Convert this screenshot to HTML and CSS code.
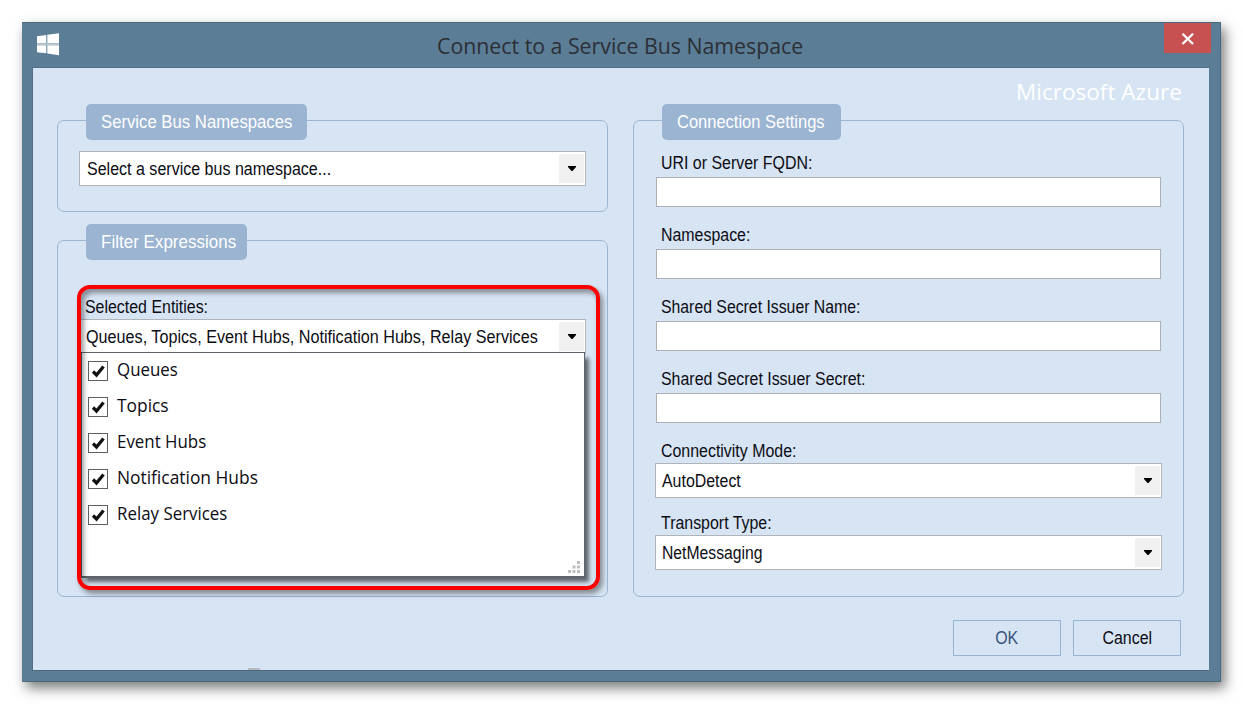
FILE: index.html
```
<!DOCTYPE html>
<html lang="en">
<head>
<meta charset="utf-8">
<title>Connect to a Service Bus Namespace</title>
<link rel="stylesheet" href="styles.css">
</head>
<body>
<div class="window">
  <header class="titlebar">
    <svg class="logo" width="23" height="23" viewBox="0 0 23 23"><path fill="#fff" d="M0 3.2 9.3 2V10.300H0zM10.300 1.800 22 .2V10.300H10.300zM0 12.200H9.300V20.300L0 19.200zM10.300 12.200H22V22.300L10.300 20.500z"/><path fill="#b9c8cf" d="M0 10.300H22V12.200H0z"/></svg>
    <h1 class="title"><span class="t t-title">Connect to a Service Bus Namespace</span></h1>
    <button class="close" aria-label="Close"><svg width="14" height="12" viewBox="0 0 14 12"><path d="M1.500.8 12 11M12 .8 1.500 11" stroke="#fff" stroke-width="2.300"/></svg></button>
  </header>
  <main class="client">
    <div class="brand"><span class="t t-brand">Microsoft Azure</span></div>
    <div class="columns">
      <div class="column">
        <section class="group group-ns">
          <div class="legend w-ns"><span class="t t-ns">Service Bus Namespaces</span></div>
          <div class="combo"><span class="t t-select">Select a service bus namespace...</span><i class="drop"><svg width="8" height="5"><path d="M0 0H8V1L4.500 5H3.500L0 1z"/></svg></i></div>
        </section>
        <section class="group group-filter">
          <div class="legend w-filter"><span class="t t-filter">Filter Expressions</span></div>
          <div class="label label-entities"><span class="t t-entities">Selected Entities:</span></div>
          <div class="combo combo-entities"><span class="t t-list">Queues, Topics, Event Hubs, Notification Hubs, Relay Services</span><i class="drop"><svg width="8" height="5"><path d="M0 0H8V1L4.500 5H3.500L0 1z"/></svg></i></div>
          <div class="menu">
            <label class="item"><i class="check"><svg width="15" height="15" viewBox="0 0 15 15"><path d="M2 7.500 5.500 11 12.500 2.500" /></svg></i><span class="t t-item">Queues</span></label>
            <label class="item"><i class="check"><svg width="15" height="15" viewBox="0 0 15 15"><path d="M2 7.500 5.500 11 12.500 2.500" /></svg></i><span class="t t-item t-wide">Topics</span></label>
            <label class="item"><i class="check"><svg width="15" height="15" viewBox="0 0 15 15"><path d="M2 7.500 5.500 11 12.500 2.500" /></svg></i><span class="t t-item">Event Hubs</span></label>
            <label class="item"><i class="check"><svg width="15" height="15" viewBox="0 0 15 15"><path d="M2 7.500 5.500 11 12.500 2.500" /></svg></i><span class="t t-item t-wide">Notification Hubs</span></label>
            <label class="item"><i class="check"><svg width="15" height="15" viewBox="0 0 15 15"><path d="M2 7.500 5.500 11 12.500 2.500" /></svg></i><span class="t t-item">Relay Services</span></label>
            <svg class="grip" width="13" height="13"><path fill="#bdbdbd" d="M9 0h3v3H9zM4.500 4.500h3v3h-3zM9 4.500h3v3H9zM0 9h3v3H0zM4.500 9h3v3h-3zM9 9h3v3H9z"/></svg>
          </div>
          <div class="highlight"></div>
        </section>
      </div>
      <section class="group group-settings">
        <div class="legend w-settings"><span class="t t-settings">Connection Settings</span></div>
        <div class="fields">
          <div class="label"><span class="t t-uri">URI or Server FQDN:</span></div><div class="input"></div>
          <div class="label"><span class="t t-name">Namespace:</span></div><div class="input"></div>
          <div class="label"><span class="t t-issuer">Shared Secret Issuer Name:</span></div><div class="input"></div>
          <div class="label"><span class="t t-secret">Shared Secret Issuer Secret:</span></div><div class="input"></div>
          <div class="label"><span class="t t-mode">Connectivity Mode:</span></div>
          <div class="combo combo-field"><span class="t t-auto">AutoDetect</span><i class="drop"><svg width="8" height="5"><path d="M0 0H8V1L4.500 5H3.500L0 1z"/></svg></i></div>
          <div class="label"><span class="t t-type">Transport Type:</span></div>
          <div class="combo combo-field"><span class="t t-net">NetMessaging</span><i class="drop"><svg width="8" height="5"><path d="M0 0H8V1L4.500 5H3.500L0 1z"/></svg></i></div>
        </div>
      </section>
    </div>
    <footer class="footer"><button class="btn ok"><span class="t t-ok">OK</span></button><button class="btn"><span class="t t-cancel">Cancel</span></button></footer>
    <div class="sliver"></div>
  </main>
</div>
</body>
</html>
```
FILE: styles.css
```
* { box-sizing: border-box; }
body {
  margin: 0;
  padding: 22px;
  height: 704px;
  overflow: hidden;
  background: #fff;
  font: 17.5px/20px "Liberation Sans", Arial, sans-serif;
  color: #0c0c14;
}
svg { display: block; }
.t { display: inline-block; white-space: pre; transform-origin: 0 50%; transform: scaleX(.91); }
.t-title { transform: scaleX(.968); }
.t-brand { transform: scaleX(1.025); }
.t-ns { transform: scaleX(.955); }
.t-filter { transform: scaleX(.972); }
.t-settings { transform: scaleX(.942); }
.t-select { transform: scaleX(.916); }
.t-list { transform: scaleX(.924); }
.t-issuer { transform: scaleX(.903); }
.t-net { transform: scaleX(.898); }
.t-item { transform: scaleX(.965); }
.t-wide { transform: scaleX(.993); }
.window {
  width: 1199px;
  height: 660px;
  display: flex;
  flex-direction: column;
  padding: 0 11px 10px 9px;
  background: #5c7d96;
  border: 1px solid #49677d;
  border-left-color: #5c7d96;
  box-shadow: 4px 6px 12px rgba(0, 0, 0, .52);
}
.titlebar { height: 44px; display: flex; align-items: flex-start; }
.logo { margin: 10px 0 0 5px; }
.title {
  flex: 1;
  margin: 8px 0 0 377px;
  font: 400 22px/28px "Open Sans", "Noto Sans", sans-serif;
  color: #2b2f35;
}
.close {
  width: 47px;
  height: 30px;
  margin-right: -2px;
  padding: 0;
  border: 0;
  background: #c75050;
  display: flex;
  align-items: center;
  justify-content: center;
}
.close svg { margin-top: 2px; }
.client {
  flex: 1;
  position: relative;
  padding: 0 24px;
  background: #d7e4f3;
  border: 1px solid #4f6f88;
  border-width: 1px 0 1px 1px;
  border-bottom-color: #49677d;
}
.brand {
  height: 52px;
  padding: 8px 0 0 959px;
  font: 22px/30px "Open Sans", "Noto Sans", sans-serif;
  color: #fff;
}
.columns { display: flex; gap: 25px; height: 477px; }
.column { width: 551px; display: flex; flex-direction: column; gap: 28px; }
.group { position: relative; border: 1px solid #9bb6d2; border-radius: 7px; }
.group-ns { height: 92px; padding-left: 21px; }
.group-filter { flex: 1; padding-left: 21px; }
.group-settings { width: 551px; padding-left: 21px; }
.legend {
  height: 36px;
  margin: -17px 0 0 7px;
  padding: 8px 0 0 15px;
  border-radius: 5px;
  background: #9ab4d2;
  color: #fff;
}
.w-ns { width: 221px; }
.w-filter { width: 161px; }
.w-settings { width: 179px; }
.combo {
  width: 507px;
  height: 35px;
  display: flex;
  justify-content: space-between;
  padding: 7px 1px 0 7px;
  margin-top: 11px;
  background: #fff;
  border: 1px solid #b0b3b8;
}
.combo .t { width: 0; }
.drop {
  flex: none;
  width: 25px;
  height: 29px;
  margin-top: -5px;
  background: #f0f0f0;
  display: flex;
  align-items: center;
  justify-content: center;
}
.combo .t { transform-origin: 0 50%; }
.label { height: 28px; padding: 4px 0 0 5px; }
.label-entities { margin-top: 33px; height: 26px; padding-left: 6px; }
.combo-entities { margin: 0; padding-left: 6px; }
.menu {
  position: absolute;
  left: 22px;
  top: 111px;
  width: 505px;
  height: 226px;
  background: #fff;
  border: 2px solid #5f6268;
  border-top-width: 1px;
  border-right-width: 1px;
  box-shadow: 5px 5px 4px -1px rgba(0, 0, 0, .55);
  font: 17.5px/24px "Open Sans", "Noto Sans", sans-serif;
}
.item { height: 36px; display: flex; gap: 9px; padding: 5px 0 0 6px; }
.item .t { margin-top: -1px; }
.check {
  width: 20px;
  height: 20px;
  margin-top: 3px;
  border: 1px solid #606060;
  padding: 2px;
}
.check path { fill: none; stroke: #111; stroke-width: 3.2; }
.grip { position: absolute; right: 3px; bottom: 2px; }
.highlight {
  position: absolute;
  left: 19px;
  top: 44px;
  width: 523px;
  height: 305px;
  border: 4px solid #fa0000;
  border-radius: 13px;
  box-shadow: 3px 4px 5px rgba(0, 0, 0, .38), inset 3px 4px 5px rgba(0, 0, 0, .38);
}
.fields { padding-top: 9px; }
.input { width: 505px; height: 30px; margin: 0 0 14px 1px; background: #fff; border: 1px solid #adb0b6; }
.fields .label { padding-left: 6px; }
.combo-field { margin: -2px 0 11px; padding-left: 6px; }
.footer { display: flex; justify-content: flex-end; gap: 12px; padding: 23px 4px 0 0; }
.btn {
  width: 108px;
  height: 36px;
  padding: 0;
  border: 1px solid #97b4d4;
  background: #d7e4f3;
  font: inherit;
  color: #0c0c14;
}
.btn .t { transform-origin: 50% 50%; }
.ok { color: #36527d; }
.sliver { position: absolute; left: 215px; bottom: 0; width: 12px; height: 2px; background: #b4bac2; }
```
